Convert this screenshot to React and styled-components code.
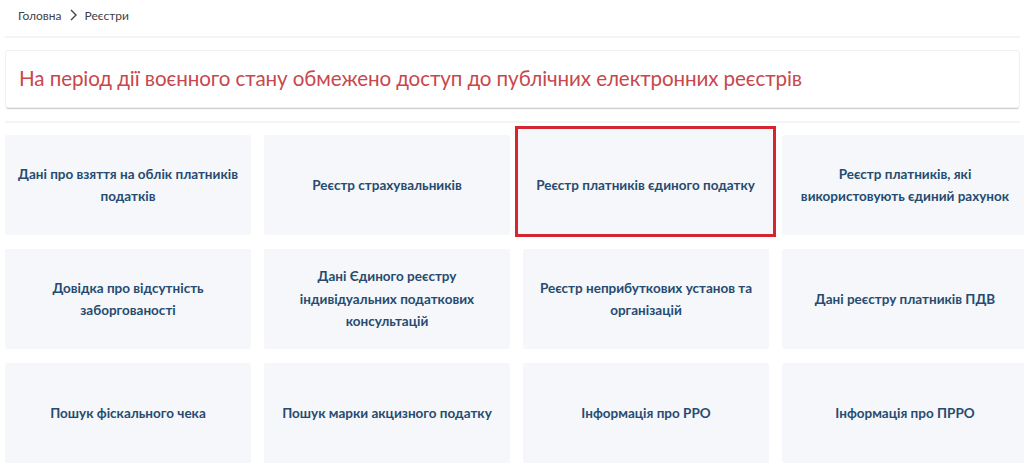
import React from "react";
import styled, { createGlobalStyle } from "styled-components";

const Global = createGlobalStyle`
  html, body { margin: 0; padding: 0; background: #fff; }
  body { font-family: Lato, "Open Sans", sans-serif; overflow: hidden; }
  * { box-sizing: border-box; }
`;

const Page = styled.div`
  width: 1023px;
  padding: 0 0 0 5px;
  display: flex;
  flex-direction: column;
`;

const Breadcrumbs = styled.nav`
  display: flex;
  align-items: center;
  gap: 7px;
  height: 30px;
  padding: 0 0 0 13px;
  font-size: 12px;
  color: #3f4145;
`;

const Crumb = styled.span`
  color: #3f4145;
`;

const Divider = styled.div`
  height: 2px;
  background: #f4f4f5;
  margin-top: ${(p) => p.$top || 0}px;
  width: 1015px;
`;

const Alert = styled.div`
  margin-top: 12px;
  width: 1015px;
  height: 58px;
  display: flex;
  align-items: center;
  padding: 0 13px 2px;
  background: #fff;
  border: 1px solid #f1f1f2;
  border-radius: 3px;
  box-shadow: 0 2px 1px -1px #c9c9cc;
  font-size: 20.6px;
  color: #c8474c;
  letter-spacing: -0.1px;
`;

const Grid = styled.div`
  margin-top: 12px;
  display: grid;
  grid-template-columns: repeat(4, 246px);
  grid-auto-rows: 100px;
  column-gap: 13px;
  row-gap: 14px;
`;

const Card = styled.a`
  display: flex;
  align-items: center;
  justify-content: center;
  text-align: center;
  padding: 0 8px;
  background: #f5f7fa;
  border-radius: 2px;
  color: #274b70;
  font-weight: 700;
  font-size: 13.5px;
  line-height: 22.5px;
  text-decoration: none;
  ${(p) =>
    p.$active &&
    `
    margin: -9px -7px -2px -8px;
    border: 3px solid #d52530;
    border-radius: 0;
    padding-top: 7px;
  `}
`;

const Chevron = () => (
  <svg width="9" height="12" viewBox="0 0 9 12" fill="none">
    <path d="M2 1l5 5-5 5" stroke="#444" strokeWidth="1.4" />
  </svg>
);

const items = [
  "Дані про взяття на облік платників податків",
  "Реєстр страхувальників",
  "Реєстр платників єдиного податку",
  "Реєстр платників, які використовують єдиний рахунок",
  "Довідка про відсутність заборгованості",
  "Дані Єдиного реєстру індивідуальних податкових консультацій",
  "Реєстр неприбуткових установ та організацій",
  "Дані реєстру платників ПДВ",
  "Пошук фіскального чека",
  "Пошук марки акцизного податку",
  "Інформація про РРО",
  "Інформація про ПРРО",
];

export default function App() {
  return (
    <>
      <Global />
      <Page>
        <Breadcrumbs>
          <Crumb>Головна</Crumb>
          <Chevron />
          <Crumb>Реєстри</Crumb>
        </Breadcrumbs>
        <Divider $top={6} />
        <Alert>
          На період дії воєнного стану обмежено доступ до публічних електронних реєстрів
        </Alert>
        <Divider $top={13} />
        <Grid>
          {items.map((t, i) => (
            <Card key={i} href="#" $active={i === 2}>
              {t}
            </Card>
          ))}
        </Grid>
      </Page>
    </>
  );
}
